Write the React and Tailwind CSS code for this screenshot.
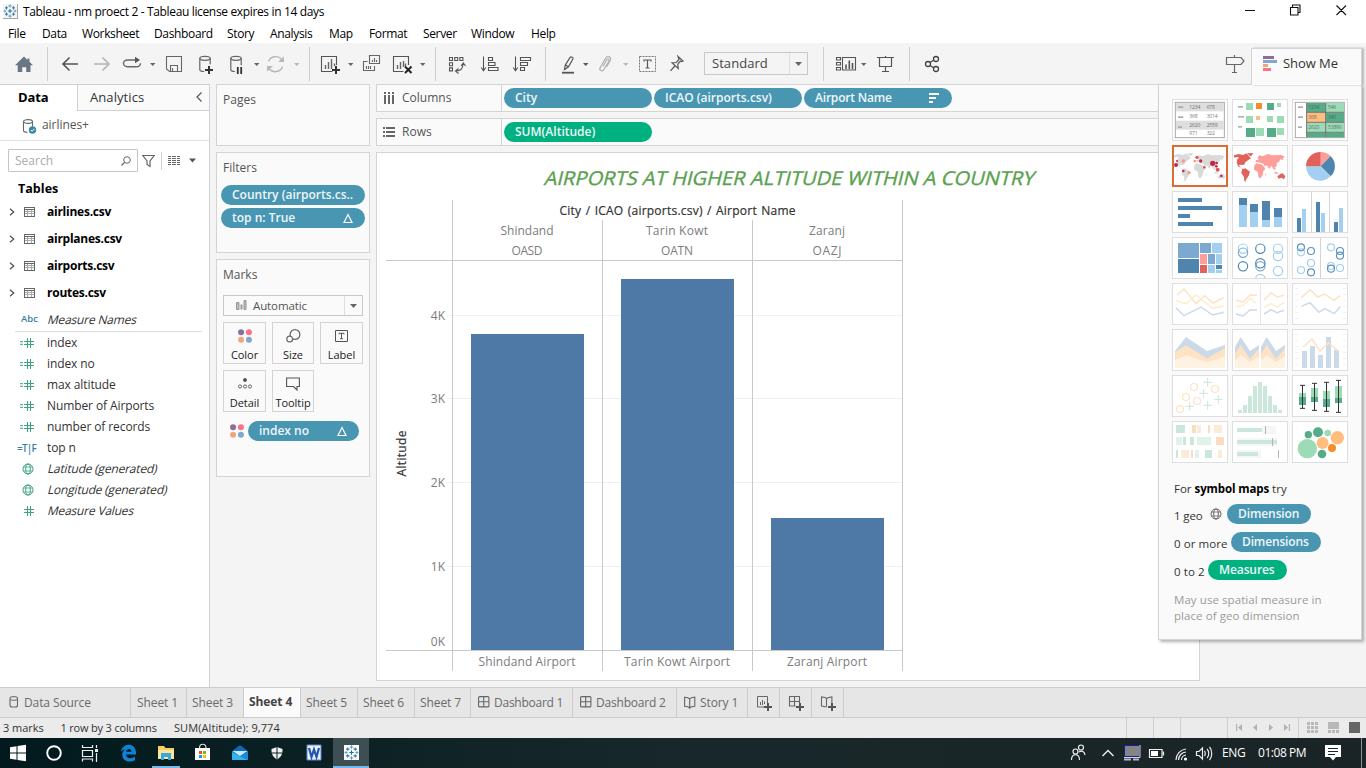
import React from "react";

const UI = "font-['Open_Sans','Noto_Sans',sans-serif]";

/* Icon strip segment: draws in window coordinates, sits in normal flow. */
function Seg({ x, y, w, h, children }) {
  return (
    <svg className="block shrink-0" width={w} height={h} viewBox={`${x} ${y} ${w} ${h}`} fill="none">
      {children}
    </svg>
  );
}

function TableauMark({ size = 14 }) {
  const plus = (x, y, r) => `M${x - r} ${y}h${2 * r}M${x} ${y - r}v${2 * r}`;
  return (
    <svg width={size} height={size} viewBox="0 0 16 16" fill="none" className="block shrink-0">
      <path d={plus(8, 8, 2.4)} stroke="#2b6f9e" strokeWidth="1.2" />
      <path d={plus(8, 2.2, 1.9) + plus(8, 13.8, 1.9) + plus(2.2, 8, 1.6) + plus(13.8, 8, 1.6)} stroke="#5b97bb" strokeWidth="1" />
      <path d={plus(4, 4.4, 1.8) + plus(12, 4.4, 1.8) + plus(4, 11.6, 1.8) + plus(12, 11.6, 1.8)} stroke="#2b7aa8" strokeWidth="1.1" />
    </svg>
  );
}

function TitleBar() {
  return (
    <div className="flex h-[22px] bg-white">
      <div className="flex grow items-center pl-[3px]">
        <div className="border-r border-b border-[#a9a9a9] bg-[#f4f4f4]"><TableauMark size={14} /></div>
        <span className="ml-[5px] pt-[2px] text-[12px] leading-[16px] tracking-[-0.35px] text-black">
          Tableau - nm proect 2 - Tableau license expires in 14 days
        </span>
      </div>
      <Seg x={1226} y={0} w={140} h={22}>
        <path d="M1245 10.500h10M1290.500 7.500h7.500v7.500h-7.500zM1292.500 7v-2h7.500v7.500h-2M1336.500 5.500l9.500 9.500M1346 5.500l-9.500 9.500" stroke="#111" strokeWidth="1.100" />
      </Seg>
    </div>
  );
}

function MenuBar() {
  return (
    <div className="flex h-[21px] items-center bg-white pl-[8px] pt-[2px] text-[12px] leading-[16px] tracking-[-0.35px] text-black">
      <span className="w-[34px]">File</span>
      <span className="w-[40px]">Data</span>
      <span className="w-[72px]">Worksheet</span>
      <span className="w-[73px]">Dashboard</span>
      <span className="w-[43px]">Story</span>
      <span className="w-[59px]">Analysis</span>
      <span className="w-[40px]">Map</span>
      <span className="w-[54px]">Format</span>
      <span className="w-[48px]">Server</span>
      <span className="w-[60px]">Window</span>
      <span>Help</span>
    </div>
  );
}

const caret = (x, y = 63) => `M${x - 2.5} ${y}h5.500l-2.750 3z`;

function Toolbar() {
  return (
    <div className="flex h-[41px] shrink-0 bg-[#f4f4f4]">
      <Seg x={0} y={43} w={310} h={41}>
        <path d="M24 56.500L15 65.200h2.700v6.800h4.500v-4.800h4v4.800h4.300v-6.800H33l-3.500-3.500v-3.200h-2v1.400z" fill="#6a7685" />
        <path d="M47.500 47v34M309.500 47v34" stroke="#cfcfcf" />
        <path d="M78 64H63M69.500 57.500L63 64l6.500 6.500" stroke="#555" strokeWidth="1.600" />
        <path d="M94 64h15M102.500 57.500L109 64l-6.500 6.500" stroke="#b4b4b4" strokeWidth="1.600" />
        <path d="M138 60h-10.500a4 3.300 0 0 0 0 6.700h9a4 3.500 0 0 0 4-3.500" stroke="#666" strokeWidth="1.400" />
        <path d="M135 56.700v6.500l5-3.200z" fill="#555" />
        <path d={caret(152.500)} fill="#666" />
        <path d="M166.500 56.500h15v15h-12l-3-2.500zM170.500 71v-5.500h7v5.500M172.500 71v-3" stroke="#666" strokeWidth="1.100" />
        <g stroke="#666" strokeWidth="1.200">
          <ellipse cx="205" cy="58.300" rx="5.200" ry="2" />
          <path d="M199.800 58.300v11.500c0 1 2 1.700 4.500 1.700M210.200 58.300v6" />
          <ellipse cx="236" cy="58.300" rx="5.200" ry="2" />
          <path d="M230.800 58.300v11.500c0 1 2 1.700 4 1.700M241.200 58.300v7" />
        </g>
        <path d="M209 66v8M205 70h8" stroke="#333" strokeWidth="2" />
        <path d="M237.800 67v7M241.200 67v7" stroke="#333" strokeWidth="1.800" />
        <path d={caret(256.500)} fill="#666" />
        <path d="M268.500 61.500a7.500 7 0 0 1 13.500-1.500M282.500 66.500a7.500 7 0 0 1-13.500 2" stroke="#b8b8b8" strokeWidth="1.400" />
        <path d="M284 56.500v5.500h-6zM267 71.500v-5.500h6z" fill="#b8b8b8" />
        <path d={caret(296.500)} fill="#b8b8b8" />
      </Seg>
      <Seg x={310} y={43} w={236} h={41}>
        <path d="M336.500 65v-8.500h-15v15h11" stroke="#555" strokeWidth="1.100" />
        <path d="M325.500 69v-4M328.500 69v-7M331.500 69v-10M334.500 66v-2.500" stroke="#666" strokeWidth="1.400" />
        <path d="M336 66v8M332 70h8" stroke="#333" strokeWidth="2" />
        <path d={caret(350.500)} fill="#666" />
        <path d="M369.500 55.500h10v8h-10zM367.500 61.500h-4v9h11v-4.500M372.500 62v-2M374.500 62v-4M376.500 62v-2M366.500 69v-3M368.500 69v-3M370.500 69v-3" stroke="#666" strokeWidth="1.100" />
        <path d="M408.500 65v-8.500h-15v15h10" stroke="#555" strokeWidth="1.100" />
        <path d="M397.500 69v-4M400.500 69v-7M403.500 67v-6M405.500 66v-2.500" stroke="#666" strokeWidth="1.400" />
        <path d="M405 66.500l6.500 6.500M411.500 66.500l-6.500 6.500" stroke="#222" strokeWidth="2" />
        <path d={caret(422.500)} fill="#666" />
        <path d="M435.500 47v34M545.500 47v34" stroke="#cfcfcf" />
        <path d="M449.500 57.500h3v3h-3zM454.700 57.500h3v3h-3zM459.900 57.500h3v3h-3zM449.500 62.700h3v3h-3zM449.500 67.900h3v3h-3zM456 71c4 0 7-2.500 7-7.500M461 66l2.300-3 2.200 3M458.500 68.500l-3 2.500 3 2.500" stroke="#555" strokeWidth="1.100" />
        <path d="M483.500 56.500v14M481.300 67.500l2.200 3.200 2.200-3.200M488.500 57.500h4v3h-4zM488.500 62.500h6.500v3h-6.500zM488.500 67.500h9.500v3h-9.500z" stroke="#555" strokeWidth="1.100" />
        <path d="M515.500 56.500v14M513.300 67.500l2.200 3.200 2.200-3.200M520.500 57.500h10v3h-10zM520.500 62.500h7v3h-7zM520.500 67.500h4v3h-4z" stroke="#555" strokeWidth="1.100" />
      </Seg>
      <Seg x={546} y={43} w={158} h={41}>
        <path d="M564.500 69.500l.8-4.500 5-7.800c.7-1 3.300.4 2.700 1.600l-4.500 8zM565.500 65l3 1.800M564.500 69.500l2-1" stroke="#555" strokeWidth="1.200" />
        <path d="M562 72.700h12" stroke="#555" strokeWidth="1.800" />
        <path d={caret(585.500)} fill="#555" />
        <path d="M603 66.500l3.500-6.500c1-1.800 3.200-.6 2.300 1.200l-5 8.500c-1.500 2.500-5 .5-3.700-2l5.500-9.500c2-3.300 6.300-1 4.500 2.500l-3.500 6" stroke="#b0b0b0" strokeWidth="1.200" />
        <path d={caret(625.500)} fill="#b8b8b8" />
        <rect x="639.500" y="56.500" width="16" height="15" stroke="#777" strokeDasharray="2 1" />
        <path d="M644 61.500v-1.500h7v1.500M647.500 60v8M645.500 68h4" stroke="#555" strokeWidth="1.200" />
        <path d="M678 56.500l5 4.500-1.800.6-.9-.5-2.500 3 .4 4.500-6.200-5.800 4.300-.3 2.700-3.200-.4-.9zM674.800 66l-4.300 4.800" stroke="#555" strokeWidth="1.200" />
      </Seg>
      <div className="mt-[9px] flex h-[23px] w-[104px] border border-[#c8c8c8] bg-[#f4f4f4]">
        <span className="w-[84px] pl-[7px] pt-[1px] text-[13px] leading-[19px] tracking-[0.050px] text-[#444]">Standard</span>
        <div className="flex grow items-center justify-center border-l border-[#dedede]">
          <svg width="7" height="4" viewBox="0 0 7 4"><path d="M0 0h7L3.500 4z" fill="#666" /></svg>
        </div>
      </div>
      <Seg x={808} y={43} w={443} h={41}>
        <path d="M823.500 47v34M909.500 47v34" stroke="#cfcfcf" />
        <path d="M836.500 57.500h4v2.500h-4zM836.500 62.500h4v2.500h-4zM836.500 67.500h4v2.500h-4zM842.500 57.500h13v12.500h-13z" stroke="#555" strokeWidth="1.100" />
        <path d="M846 69v-4.500M849.300 69v-8.500M852.500 69v-6" stroke="#555" strokeWidth="1.600" />
        <path d={caret(863.500)} fill="#666" />
        <path d="M877 57.500h17M879.500 58v8.500h12v-8.500M885.500 56v1.500M885.500 66.500v4.500M882 71.500h7" stroke="#555" strokeWidth="1.200" />
        <g stroke="#444" strokeWidth="1.300">
          <circle cx="928" cy="64" r="2.500" /><circle cx="936" cy="59" r="2.500" /><circle cx="936" cy="69" r="2.500" />
          <path d="M930 62.500l4-2.500M930 65.500l4 2.500" />
        </g>
        <path d="M1226.500 57.500h14.500l3 3.500-3 3.500h-14.500zM1234.500 55v2.500M1234.500 64.500v8M1232 72.500h5" stroke="#666" strokeWidth="1.200" />
      </Seg>
    </div>
  );
}

function TableIcon() {
  return (
    <svg width="11" height="10" viewBox="0 0 11 10" fill="none" shapeRendering="crispEdges">
      <path d="M1 2.500h9M1 4.500h9M1 6.500h9M3.500 3v6M7.500 3v6" stroke="#aaa" />
      <path d="M.5.500h10v9H.5zM1 2.500h9" stroke="#666" />
    </svg>
  );
}

function HashIcon({ calc }) {
  return (
    <svg width="16" height="12" viewBox="0 0 16 12" fill="none">
      {calc && <path d="M1 4.700h3M1 7.300h3" stroke="#3fa37c" />}
      <path d="M5 4.500h10M5 7.500h10M8.500 1v10M11.500 1v10" stroke="#3fa37c" strokeWidth="1.100" />
    </svg>
  );
}

function Globe({ color = "#3fa37c", size = 12 }) {
  return (
    <svg width={size} height={size} viewBox="0 0 12 12" fill="none" stroke={color}>
      <circle cx="6" cy="6" r="5" /><ellipse cx="6" cy="6" rx="2.300" ry="5" /><path d="M1.500 4h9M1.500 8h9" strokeWidth=".8" />
    </svg>
  );
}

const fields = [
  ["calc", "index"], ["calc", "index no"], ["calc", "max altitude"], ["calc", "Number of Airports"],
  ["calc", "number of records"], ["tf", "top n"], ["geo", "Latitude (generated)"], ["geo", "Longitude (generated)"], ["num", "Measure Values"],
];

function FieldIcon({ kind }) {
  if (kind === "tf") return <span className="text-[10px] font-semibold tracking-[-0.750px] whitespace-nowrap text-[#3a7f9f]">=T|F</span>;
  if (kind === "geo") return <Globe />;
  return <HashIcon calc={kind === "calc"} />;
}

const slanted = "inline-block origin-center -skew-x-[14deg]";

function DataPane() {
  return (
    <aside className="flex w-[210px] shrink-0 flex-col border-t border-r border-[#d0d0d0] bg-white">
      <div className="flex h-[26px]">
        <div className="w-[77px] pt-[3px] pl-[18px] text-[13px] leading-[18px] font-bold tracking-[-0.1px] text-black">Data</div>
        <div className="flex grow items-center justify-between border-b border-l border-[#d0d0d0] bg-[#fafafa] pr-[7px] pl-[12px] text-[13px] leading-[18px] tracking-[0.080px] text-[#333]">
          <span className="-mt-[2px]">Analytics</span>
          <svg width="6" height="10" viewBox="0 0 6 10" fill="none" className="-mt-[2px]"><path d="M5.500.5L1 5l4.500 4.500" stroke="#555" strokeWidth="1.200" /></svg>
        </div>
      </div>
      <div className="flex h-[30px] items-center border-b border-[#e0e0e0] pl-[22px]">
        <svg width="15" height="16" viewBox="0 0 15 16" fill="none">
          <ellipse cx="6" cy="3.500" rx="4.500" ry="1.900" stroke="#666" strokeWidth="1.100" />
          <path d="M1.500 3.500v9c0 1 1.500 1.700 4 1.800M10.500 3.500v5" stroke="#666" strokeWidth="1.100" />
          <circle cx="10.500" cy="12" r="3.700" fill="#3a87a8" /><path d="M8.800 12l1.300 1.300 2.200-2.500" stroke="#fff" />
        </svg>
        <span className="-mt-px ml-[5px] text-[12px] tracking-[-0.050px] text-[#555]">airlines+</span>
      </div>
      <div className="mt-[8px] flex h-[23px] items-center pl-[8px]">
        <div className="flex h-[23px] w-[130px] items-center justify-between rounded-[1px] border border-[#c4c4c4] pr-[6px] pl-[6px] text-[12px] text-[#aaa]">
          <span>Search</span>
          <svg width="10" height="10" viewBox="0 0 10 10" fill="none"><circle cx="6" cy="4" r="3.300" stroke="#666" /><path d="M3.600 6.400L.5 9.500" stroke="#666" strokeWidth="1.300" /></svg>
        </div>
        <svg className="ml-[4px]" width="13" height="14" viewBox="0 0 13 14" fill="none"><path d="M.8 1.500h11.400L8 7v5.500l-3-2V7z" stroke="#666" strokeWidth="1.200" /></svg>
        <div className="ml-[6px] h-[18px] w-px bg-[#d0d0d0]" />
        <svg className="ml-[6px]" width="13" height="10" viewBox="0 0 13 10" fill="none" shapeRendering="crispEdges"><path d="M0 .5h3M4 .5h4M9 .5h3M0 2.500h3M4 2.500h4M9 2.500h3M0 4.500h3M4 4.500h4M9 4.500h3M0 6.500h3M4 6.500h4M9 6.500h3M0 8.500h3M4 8.500h4M9 8.500h3" stroke="#666" /></svg>
        <svg className="ml-[8px]" width="7" height="5" viewBox="0 0 7 5"><path d="M0 .5h7L3.500 4.500z" fill="#555" /></svg>
      </div>
      <div className="mt-[8px] h-[18px] pl-[18px] text-[12.5px] leading-[18px] font-bold tracking-[0.030px] text-black">Tables</div>
      <div className="flex flex-col text-[12px] font-bold tracking-[-0.25px] text-black">
        {["airlines.csv", "airplanes.csv", "airports.csv", "routes.csv"].map((t) => (
          <div key={t} className="flex h-[27px] items-center pl-[9px]">
            <svg width="6" height="8" viewBox="0 0 6 8" fill="none"><path d="M1 .7L4.700 4 1 7.300" stroke="#555" strokeWidth="1.300" /></svg>
            <span className="ml-[9px] w-[23px] pt-[1px]"><TableIcon /></span>
            <span>{t}</span>
          </div>
        ))}
      </div>
      <div className="flex h-[25px] items-center pt-[2px] pl-[21px] text-[12px]">
        <span className="w-[27px] text-[9.500px] font-semibold text-[#3a7f9f]">Abc</span>
        <span className={"tracking-[-0.2px] text-[#333] " + slanted}>Measure Names</span>
      </div>
      <div className="mr-[7px] ml-[15px] h-px bg-[#dcdcdc]" />
      <div className="flex flex-col text-[12px] text-[#333]">
        {fields.map(([kind, name]) => (
          <div key={name} className="flex h-[21px] items-center">
            <span className={"flex w-[47px] shrink-0 items-center pt-px " + (kind === "geo" ? "pl-[22px]" : kind === "tf" ? "pl-[17px]" : "pl-[19px]")}><FieldIcon kind={kind} /></span>
            <span className={kind === "geo" || kind === "num" ? "ml-px tracking-[-0.2px] " + slanted : "tracking-[-0.1px]"}>{name}</span>
          </div>
        ))}
      </div>
    </aside>
  );
}

function Pill({ className, children, icon }) {
  return (
    <div className={"flex h-[20px] items-center justify-between rounded-full pr-[12px] pl-[11px] text-[12px] leading-[18px] font-semibold whitespace-nowrap text-[#eef6f9] " + className}>
      <span className="-mt-px">{children}</span>{icon}
    </div>
  );
}
const Delta = () => <svg width="10" height="11" viewBox="0 0 10 11" fill="none"><path d="M5 1.500L9 9.500H1z" stroke="#fff" strokeWidth="1.200" /></svg>;

function Card({ title, className, children }) {
  return (
    <section className={"flex flex-col border border-[#d4d4d4] bg-[#fafafa] " + className}>
      <h2 className="pt-[6px] pl-[6px] text-[12px] leading-[18px] text-[#555]">{title}</h2>
      {children}
    </section>
  );
}

function Dots() {
  return (
    <svg width="14" height="14" viewBox="0 0 15 15">
      <circle cx="3.300" cy="3.500" r="3.200" fill="#8a6f9a" /><circle cx="11.700" cy="3.500" r="3.200" fill="#fb7185" />
      <circle cx="3.300" cy="11.500" r="3.200" fill="#f1a67c" /><circle cx="11.700" cy="11.500" r="3.200" fill="#83a6cf" />
    </svg>
  );
}

function MarkButton({ label, children }) {
  return (
    <div className="flex h-[42px] flex-col items-center justify-between border border-[#d4d4d4] bg-[#fafafa] pt-[5px]">
      <div className="flex h-[15px] items-center">{children}</div>
      <span className="text-[11px] leading-[17px] tracking-[-0.05px] text-[#222]">{label}</span>
    </div>
  );
}

function Cards() {
  return (
    <div className="ml-[6px] flex w-[154px] shrink-0 flex-col gap-[6px]">
      <Card title="Pages" className="h-[62px]" />
      <Card title="Filters" className="h-[101px]">
        <div className="mt-[8px] flex flex-col gap-[3px] px-[4px]">
          <Pill className="bg-[#4996b2]">Country (airports.cs..</Pill>
          <Pill className="bg-[#4996b2]" icon={<Delta />}>top n: True</Pill>
        </div>
      </Card>
      <Card title="Marks" className="h-[218px]">
        <div className="mx-[6px] mt-[11px] flex h-[21px] shrink-0 border border-[#c8c8c8] bg-[#fafafa]">
          <div className="flex w-[121px] items-center border-r border-[#dedede] pl-[12px]">
            <svg width="11" height="10" viewBox="0 0 11 10" className="-mt-px"><path d="M.5 2.500h2.500v7H.5z" fill="#bbb" stroke="#999" /><path d="M4.500 4.500h2v5h-2z" fill="#999" /><path d="M8 .5h2v9H8z" fill="#bbb" stroke="#999" /></svg>
            <span className="ml-[6px] text-[11.500px] tracking-[-0.100px] text-[#555]">Automatic</span>
          </div>
          <div className="flex grow items-center justify-center"><svg width="7" height="4" viewBox="0 0 7 4"><path d="M0 0h7L3.500 4z" fill="#666" /></svg></div>
        </div>
        <div className="mx-[6px] mt-[6px] grid grid-cols-[43px_42px_43px] gap-x-[6px] gap-y-[6px]">
          <MarkButton label="Color"><Dots /></MarkButton>
          <MarkButton label="Size"><svg width="15" height="14" viewBox="0 0 15 14" fill="none" stroke="#666" strokeWidth="1.200"><circle cx="9" cy="5.500" r="4.900" /><circle cx="3.700" cy="10" r="2.900" fill="#fafafa" /></svg></MarkButton>
          <MarkButton label="Label"><svg width="13" height="12" viewBox="0 0 13 12" fill="none" stroke="#555"><path d="M.5.500h12v11H.500z" /><path d="M4 4.300V3.300h5v1M6.500 3.300v5.400M5 8.700h3" /></svg></MarkButton>
          <MarkButton label="Detail"><svg width="14" height="11" viewBox="0 0 14 11" fill="none" stroke="#666"><circle cx="7" cy="2" r="1.600" fill="#555" /><circle cx="2" cy="8.500" r="1.600" /><circle cx="7" cy="8.500" r="1.600" /><circle cx="12" cy="8.500" r="1.600" /></svg></MarkButton>
          <MarkButton label="Tooltip"><svg width="14" height="14" viewBox="0 0 14 14" fill="none" stroke="#555" strokeWidth="1.100"><path d="M.6 1h12.800v8.500H11V13L7.500 9.500H.6z" /></svg></MarkButton>
        </div>
        <div className="mt-[9px] flex items-center pl-[13px]">
          <Dots />
          <Pill className="ml-[4px] w-[111px] bg-[#4996b2]" icon={<Delta />}>index no</Pill>
        </div>
      </Card>
    </div>
  );
}

function Shelf({ label, icon, children }) {
  return (
    <div className="flex h-[28px] shrink-0 border border-[#d4d4d4] bg-[#fafafa]">
      <div className="flex w-[125px] items-center border-r border-[#d4d4d4] pl-[6px]">
        {icon}<span className="ml-[7px] text-[12px] text-[#555]">{label}</span>
      </div>
      <div className="flex items-center gap-[2px] pl-[2px]">{children}</div>
    </div>
  );
}

const bars = [
  { x: 452, top: 334, city: "Shindand", cw: 53, icao: "OASD", iw: 31, name: "Shindand Airport", nw: 97 },
  { x: 602, top: 279, city: "Tarin Kowt", cw: 62, icao: "OATN", iw: 32, name: "Tarin Kowt Airport", nw: 106 },
  { x: 752, top: 518, city: "Zaranj", cw: 36, icao: "OAZJ", iw: 29, name: "Zaranj Airport", nw: 80 },
];

function Chart() {
  return (
    <svg className="block" width="821" height="527" viewBox="377 153 821 527" fontSize="12" fill="#7c7c7c">
      <text transform="translate(543.5 185) skewX(-14)" fontSize="19" textLength="490" lengthAdjust="spacingAndGlyphs" fill="#59a14f" stroke="#59a14f" strokeWidth=".35">AIRPORTS AT HIGHER ALTITUDE WITHIN A COUNTRY</text>
      <g fill="#333" stroke="#333" strokeWidth=".2">
        <text x="559.500" y="215" textLength="236" wordSpacing="1">City / ICAO (airports.csv) / Airport Name</text>
        <text transform="translate(406 476.500) rotate(-90)" textLength="46">Altitude</text>
      </g>
      <g shapeRendering="crispEdges">
        {[315, 398, 482, 566].map((y) => <path key={y} d={`M447 ${y}.5H902`} stroke="#f0f0f0" />)}
        {bars.map((b) => <rect key={b.x} x={b.x + 19} y={b.top} width="113" height={650 - b.top} fill="#4e79a7" />)}
        <path d="M386 260.500h517M386 650.500h517M452.500 200v471M602.500 220v451M752.500 220v451M902.500 200v471" stroke="#c9c9c9" />
      </g>
      {bars.map((b) => (
        <g key={b.name} textAnchor="middle">
          <text x={b.x + 75} y="235" textLength={b.cw}>{b.city}</text>
          <text x={b.x + 75} y="255" textLength={b.iw}>{b.icao}</text>
          <text x={b.x + 75} y="666" textLength={b.nw}>{b.name}</text>
        </g>
      ))}
      <g textAnchor="end">
        <text x="445" y="320">4K</text><text x="445" y="403">3K</text><text x="445" y="487">2K</text><text x="445" y="571">1K</text><text x="445" y="646">0K</text>
      </g>
    </svg>
  );
}

function Worksheet() {
  return (
    <div className="ml-[6px] flex w-[824px] shrink-0 flex-col gap-[6px]">
      <Shelf label="Columns" icon={<svg width="12" height="12" viewBox="0 0 12 12" shapeRendering="crispEdges"><path d="M1 0h2v2H1zM5 0h2v2H5zM9 0h2v2H9zM1 3h2v9H1zM5 3h2v9H5zM9 3h2v9H9z" fill="#666" /></svg>}>
        <Pill className="w-[148px] bg-[#4996b2]">City</Pill>
        <Pill className="w-[148px] bg-[#4996b2]">ICAO (airports.csv)</Pill>
        <Pill className="w-[148px] bg-[#4996b2]" icon={<svg width="11" height="10" viewBox="0 0 11 10" shapeRendering="crispEdges"><path d="M0 0h10v2H0zM0 4h7v2H0zM0 8h4v2H0z" fill="#fff" /></svg>}><span className="tracking-[-0.2px]">Airport Name</span></Pill>
      </Shelf>
      <Shelf label="Rows" icon={<svg width="12" height="10" viewBox="0 0 12 10" shapeRendering="crispEdges"><path d="M0 0h2v2H0zM0 4h2v2H0zM0 8h2v2H0zM3 0h9v2H3zM3 4h9v2H3zM3 8h9v2H3z" fill="#666" /></svg>}>
        <Pill className="w-[148px] bg-[#00b180]">SUM(Altitude)</Pill>
      </Shelf>
      <div className="h-[529px] border border-[#d4d4d4] bg-white"><Chart /></div>
    </div>
  );
}

/* Show Me thumbnails, drawn on a 168 x 126 grid. */
const R = (list, fill) => list.map(([x, y, w, h], i) => <rect key={i} x={x} y={y} width={w} height={h} fill={fill} />);
const C = (list, stroke) => list.map(([x, y], i) => <circle key={i} cx={x} cy={y} r="14" fill="none" stroke={stroke} strokeWidth="3.500" />);
const C2 = (list, stroke) => list.map(([x, y], i) => <circle key={i} cx={x} cy={y} r="10.500" fill="none" stroke={stroke} strokeWidth="3.500" />);
const L = (pts, stroke) => <polyline points={pts} fill="none" stroke={stroke} strokeWidth="4.500" />;
const N = (x, y, s) => <text x={x} y={y} fontSize="15" fill="#555" textLength={s.length * 8.2} opacity=".8">{s}</text>;

const americas = "M6 31L20 27 33 30 44 25 50 32 57 40 48 46 40 52 36 60 30 59 20 60 28 70 34 73 30 70 18 64 14 52 16 42 22 38 14 36 6 38zM46 25L64 24 58 33 52 32zM30 73L40 70 54 80 50 92 42 104 41 110 37 108 36 96 28 84z";
const eurasia = "M70 51L72 45 80 44 76 38 82 31 92 34 108 27 120 31 148 30 159 35 152 40 154 45 144 43 142 50 134 54 134 64 128 67 132 72 126 74 118 62 112 71 104 61 98 64 94 56 88 54 80 52zM67 62L72 55 84 57 92 60 100 72 94 78 92 90 86 99 80 98 77 80 66 74zM100 86h4l-3 7zM126 80l10 2 2 6-10-3z";
const aus = "M136 94L146 86 152 85 160 94 156 103 148 98 140 101z";

const thumbs = [
  <><rect x="10" y="10" width="147" height="106" fill="#fff" stroke="#a9a9a9" strokeWidth="3" />{R([[12, 12, 143, 25], [12, 65, 143, 27]], "#dedede")}{R([[18, 22, 16, 5], [18, 52, 16, 5], [18, 82, 12, 5]], "#aaa")}{N(52, 31, "1234")}{N(104, 31, "678")}{N(52, 58, "368")}{N(104, 58, "3014")}{N(52, 85, "2620")}{N(104, 85, "2559")}{N(52, 109, "971")}{N(104, 109, "322")}</>,
  <>{R([[18, 21, 15, 5], [18, 51, 18, 5], [18, 81, 12, 5]], "#b3b3b3")}{R([[42, 12, 21, 21], [42, 51, 21, 21], [135, 12, 12, 12], [105, 51, 18, 18], [135, 51, 21, 21], [72, 87, 24, 24], [135, 87, 21, 21]], "#9bdbb5")}{R([[42, 87, 27, 27], [105, 12, 21, 21], [105, 87, 27, 27]], "#54ac88")}{R([[72, 12, 18, 18]], "#f28e2b")}{R([[72, 51, 12, 12]], "#ffbe7d")}</>,
  <><rect x="10" y="10" width="147" height="106" fill="#fff" stroke="#a9a9a9" strokeWidth="3" />{R([[45, 12, 55, 27], [102, 42, 54, 27], [45, 102, 55, 13], [102, 102, 54, 13]], "#54ac88")}{R([[102, 12, 54, 27], [45, 72, 55, 27], [102, 72, 54, 27]], "#9bdbb5")}{R([[45, 42, 55, 27]], "#ffbe7d")}<path d="M44 12v103M101 12v103M44 40h112M44 70h112M44 100h112" stroke="#6e6e6e" strokeWidth="3" />{R([[18, 22, 15, 5], [18, 52, 15, 5], [18, 82, 12, 5]], "#aaa")}{N(49, 31, "1234")}{N(108, 31, "546")}{N(49, 61, "368")}{N(108, 61, "340")}{N(49, 91, "2620")}{N(108, 91, "53890")}</>,
  <><path d={americas + eurasia + aus} fill="#dadada" />{[[12, 60, 6], [15, 48, 3], [34, 78, 4], [86, 48, 5], [122, 55, 8], [134, 54, 4], [133, 64, 4], [148, 93, 4]].map(([x, y, r], i) => <circle key={i} cx={x} cy={y} r={r} fill="#c1284a" />)}{[[34, 48, 5], [75, 37, 5], [68, 48, 4], [97, 67, 4], [51, 83, 5], [137, 74, 6]].map(([x, y, r], i) => <circle key={i} cx={x} cy={y} r={r} fill={i % 2 ? "#e1574f" : "#ff9888"} />)}</>,
  <><path d={americas + aus} fill="#e1625a" /><path d={eurasia} fill="#ff9d9a" /></>,
  <><path d="M86 64V21A43 43 0 0 1 116 33z" fill="#ff9d9a" /><path d="M86 64L116 33A43 43 0 0 1 116 94z" fill="#4e84ae" /><path d="M86 64L116 94A43 43 0 0 1 42 64z" fill="#a3d0f0" /><path d="M86 64H42A43 43 0 0 1 86 21z" fill="#e1625a" /></>,
  <>{R([[18, 21, 72, 12], [18, 45, 132, 12], [18, 69, 36, 12], [18, 93, 105, 12]], "#4e84ae")}</>,
  <>{R([[21, 42, 24, 66], [54, 63, 24, 45], [90, 87, 24, 21], [126, 78, 24, 30]], "#a3d0f0")}{R([[21, 21, 24, 21], [54, 39, 24, 24], [90, 30, 24, 57], [126, 51, 24, 27]], "#4e84ae")}</>,
  <>{R([[57, 3, 3, 120], [111, 3, 3, 120]], "#d4d4d4")}{R([[15, 81, 12, 42], [72, 33, 12, 90], [126, 93, 12, 30]], "#4e84ae")}{R([[30, 54, 12, 69], [87, 66, 12, 57], [141, 51, 12, 72]], "#a3d0f0")}</>,
  <>{R([[18, 18, 63, 45], [84, 18, 33, 30], [108, 51, 21, 30]], "#7ba9cf")}{R([[120, 18, 30, 30], [132, 51, 18, 30], [108, 84, 21, 24], [132, 99, 18, 9]], "#a3d0f0")}{R([[18, 66, 63, 42], [132, 84, 18, 12]], "#4e84ae")}{R([[84, 51, 21, 30]], "#ff9d9a")}{R([[84, 84, 21, 24]], "#e1625a")}</>,
  <>{C([[33, 35], [138, 35], [138, 57], [138, 102], [85, 126]], "#a3cfee")}{C([[33, 47], [85, 88]], "#7ba9cf")}{C([[33, 88], [85, 35], [85, 79]], "#4e84ae")}</>,
  <>{R([[84, 3, 3, 120]], "#d4d4d4")}{C2([[27, 46], [57, 78], [27, 99], [117, 31], [117, 87], [144, 93]], "#a3cfee")}{C2([[27, 31], [57, 42], [57, 106], [144, 42], [144, 56], [117, 95]], "#5f93bd")}</>,
  <>{L("15,36 36,18 72,62 98,38 123,60 155,44", "#fde2c4")}{L("12,53 42,62 72,36 122,76 155,69", "#fdeecb")}{L("12,75 36,98 87,72 122,96 155,88", "#cbdae9")}</>,
  <>{R([[84, 3, 3, 120]], "#e5e5e5")}{L("12,52 33,57 54,36 75,37", "#fde2c4")}{L("96,52 117,29 135,42 156,37", "#fde2c4")}{L("12,71 33,68 54,46 72,60", "#fdeecb")}{L("96,74 117,62 135,72 156,59", "#fdeecb")}{L("12,93 33,99 54,81 75,81", "#cbdae9")}{L("96,93 117,80 135,89 156,82", "#cbdae9")}</>,
  <>{R([15, 33, 51, 69, 87, 105].flatMap((y) => [[9, y, 9, 2], [153, y, 9, 2]]), "#e8e8e8")}{L("28,44 54,20 78,42 98,33 126,52 145,37", "#fde2c4")}{L("28,70 54,59 81,88 98,77 127,92 145,70", "#cbdae9")}</>,
  <><path d="M9 66L42 24 105 66 159 48V117H9z" fill="#cbdae9" /><path d="M9 70L42 49 105 88 159 57V117H9z" fill="#fde2c4" /><path d="M9 93L42 79 105 100 159 82V117H9z" fill="#fef3e2" /></>,
  <>{[0, 78].map((d) => <g key={d} transform={`translate(${d})`}><path d="M9 54L26 24 54 66 81 48V117H9z" fill="#cbdae9" /><path d="M9 75L26 48 54 90 81 58V117H9z" fill="#fde2c4" /><path d="M9 95L26 78 54 99 81 82V117H9z" fill="#fef3e2" /></g>)}{R([[81, 20, 6, 97]], "#fff")}</>,
  <>{R([15, 33, 51, 69, 87, 105].flatMap((y) => [[9, y, 9, 2], [153, y, 9, 2]]), "#e8e8e8")}{R([[30, 66, 15, 51], [54, 51, 15, 66], [78, 78, 15, 39], [102, 24, 15, 93], [126, 63, 15, 54]], "#cbdae9")}{L("34,54 60,30 84,66 110,41 138,66", "#fde2c4")}</>,
  <>{C2([[66, 36], [129, 42], [42, 66], [75, 78], [24, 102]], "#fde2c4")}<path d="M94 22h26M107 9v26M82 55h26M95 42v26M126 73h26M139 60v26M40 94h26M53 81v26M94 91h26M107 78v26" stroke="#cbe6da" strokeWidth="3" /></>,
  <>{R([[18, 105, 12, 9], [33, 90, 12, 24], [48, 63, 12, 51], [63, 33, 12, 81], [78, 21, 12, 93], [93, 33, 12, 81], [108, 63, 12, 51], [123, 90, 12, 24], [138, 105, 12, 9]], "#cbe6da")}</>,
  <>{R([[21, 54, 21, 12], [57, 39, 21, 27], [93, 48, 21, 24], [129, 33, 21, 36]], "#9bdbb5")}{R([[21, 66, 21, 24], [57, 66, 21, 15], [93, 72, 21, 24], [129, 69, 21, 15]], "#54ac88")}<path d="M31.500 31v70M67.500 25v82M103.500 22v88M139.500 16v97M24 31h15M24 100h15M60 25h15M60 106h15M96 22h15M96 109h15M132 16h15M132 112h15" stroke="#333" strokeWidth="3" /></>,
  <>{R([[12, 12, 27, 24], [54, 48, 12, 24], [12, 87, 6, 24], [99, 87, 21, 24], [33, 48, 9, 24]], "#cbe6da")}{R([[12, 48, 18, 24], [75, 48, 42, 24], [69, 87, 12, 24]], "#e0f2e9")}{R([[60, 12, 12, 24], [108, 12, 6, 24], [132, 48, 24, 24], [57, 87, 6, 24]], "#fbdcc0")}{R([[75, 12, 12, 24], [126, 12, 24, 24], [27, 87, 24, 24], [138, 87, 12, 24]], "#fdebd9")}</>,
  <>{R([[90, 15, 42, 24], [15, 51, 120, 24], [15, 87, 72, 24]], "#f6f6f6")}{R([[15, 21, 75, 12], [15, 57, 120, 12], [15, 93, 63, 12]], "#cbe6da")}{R([[99, 15, 3, 24], [120, 51, 3, 24], [138, 87, 3, 24]], "#b4b4b4")}</>,
  <>{[[46, 83, 29, "#9bdbb5"], [49, 41, 11, "#54ac88"], [78, 34, 15, "#54ac88"], [107, 36, 10, "#9bdbb5"], [136, 50, 20, "#ffbe7d"], [92, 66, 18, "#ffbe7d"], [120, 81, 12, "#f28e2b"], [90, 99, 13, "#54ac88"]].map(([x, y, r, f], i) => <circle key={i} cx={x} cy={y} r={r} fill={f} />)}</>,
];

function ShowMe() {
  return (
    <div className="absolute top-[48px] left-[1158px] z-10 flex w-[204px] flex-col text-[12px] text-[#333]">
      <div className="z-10 -mb-px ml-[93px] flex h-[37px] items-center border border-b-0 border-[#d4d4d4] bg-[#fafafa] pl-[11px] shadow-[2px_0_2px_rgba(0,0,0,0.25)]">
        <svg width="15" height="16" viewBox="0 0 15 16" className="-mt-[6px]" shapeRendering="crispEdges"><path d="M0 0h11v3H0z" fill="#8a6f9a" /><path d="M0 4h14v3H0z" fill="#83a6cf" /><path d="M0 8h5v3H0z" fill="#f1a67c" /><path d="M0 12h8v3H0z" fill="#fb7185" /></svg>
        <span className="-mt-[6px] ml-[5px] text-[13px] tracking-[-0.050px] text-[#333]">Show Me</span>
      </div>
      <div className="h-[556px] border border-[#d4d4d4] bg-[#fafafa] pt-[14px] pl-[13px] shadow-[2px_2px_3px_rgba(0,0,0,0.3)]">
        <div className="grid grid-cols-[56px_56px_56px] gap-[4px]">
          {thumbs.map((t, i) => (
            <div key={i} className={"h-[42px] bg-white " + (i === 3 ? "p-px outline-2 -outline-offset-2 outline-[#dd6b35]" : "border border-[#dedede]")}>
              <svg className="block" width="54" height="40" viewBox="3 3 162 120">{t}</svg>
            </div>
          ))}
        </div>
        <div className="mt-[17px] flex flex-col pl-[2px] text-[11.500px]">
          <div className="h-[16px] leading-[18px]">For <b className="font-bold tracking-[-0.1px] text-black">symbol maps</b> try</div>
          <div className="mt-[8px] flex h-[20px] items-center">
            <span className="w-[36px] pt-[4px] tracking-[-0.1px]">1 geo</span>
            <Globe color="#666" size={12} />
            <Pill className="ml-[5px] w-[84px] bg-[#4996b2] tracking-[-0.100px]">Dimension</Pill>
          </div>
          <div className="mt-[8px] flex h-[20px] items-center">
            <span className="w-[57px] pt-[4px] tracking-[0.080px]">0 or more</span>
            <Pill className="w-[90px] bg-[#4996b2] tracking-[-0.150px]">Dimensions</Pill>
          </div>
          <div className="mt-[8px] flex h-[20px] items-center">
            <span className="w-[34px] pt-[4px] tracking-[0.080px]">0 to 2</span>
            <Pill className="w-[79px] bg-[#00b180] tracking-[-0.100px]">Measures</Pill>
          </div>
          <p className="mt-[12px] w-[170px] leading-[16px] tracking-[0.070px] text-[#9a9a9a]">May use spatial measure in place of geo dimension</p>
        </div>
      </div>
    </div>
  );
}

const GridIcon = () => <svg width="12" height="12" viewBox="0 0 12 12" fill="none" className="-mt-px shrink-0"><rect x=".6" y=".6" width="10.300" height="10.300" rx="1" stroke="#666" strokeWidth="1.100" /><path d="M5.700.6v10.300M.6 5.700h10.300" stroke="#666" strokeWidth="1.100" /></svg>;
const StoryIcon = () => <svg width="12" height="13" viewBox="0 0 12 13" fill="none" className="shrink-0"><path d="M.6 1.200l3.400.5 1.700 1.200 1.700-1.200 3.400-.5v9l-3.400.5-1.700 1.500L4 10.700l-3.400-.5zM5.700 3v9" stroke="#666" strokeWidth="1.100" /></svg>;

function SheetTabs() {
  const tab = "flex h-full shrink-0 items-center border-r border-[#cccccc] ";
  return (
    <div className="flex h-[31px] shrink-0 border-y border-[#cccccc] bg-[#e6e6e6] text-[12px] tracking-[-0.1px] whitespace-nowrap text-[#6a6a6a]">
      <div className={tab + "w-[131px] pl-[9px]"}>
        <svg width="10" height="12" viewBox="0 0 10 12" fill="none" className="-mt-[2px] mr-[5px]"><rect x="1" y=".7" width="7.500" height="10.300" rx="2" stroke="#666" strokeWidth="1.100" /><path d="M1 3.500c1 1 6.500 1 7.500 0" stroke="#666" /></svg>
        Data Source
      </div>
      <div className={tab + "w-[56px] pl-[6px]"}>Sheet 1</div>
      <div className={tab + "w-[57px] pl-[5px]"}>Sheet 3</div>
      <div className={tab + "w-[57px] bg-[#fafafa] pb-[2px] pl-[5px] font-bold tracking-[-0.1px] text-[#444]"}>Sheet 4</div>
      <div className={tab + "w-[57px] pl-[5px]"}>Sheet 5</div>
      <div className={tab + "w-[57px] pl-[5px]"}>Sheet 6</div>
      <div className={tab + "w-[56px] pl-[5px]"}>Sheet 7</div>
      <div className={tab + "w-[102px] gap-[4px] pl-[7px] tracking-[-0.25px]"}><GridIcon />Dashboard 1</div>
      <div className={tab + "w-[104px] gap-[4px] pl-[7px] tracking-[-0.2px]"}><GridIcon />Dashboard 2</div>
      <div className={tab + "w-[71px] gap-[4px] pl-[7px]"}><StoryIcon />Story 1</div>
      <Seg x={748} y={688} w={100} h={29}>
        <path d="M767.500 703v-6.500h-10v10.500h7M760.500 705v-3M762.500 705v-5M764.500 704v-2.500" stroke="#666" />
        <path d="M799.500 703v-6.500h-10v9.500h6M794.500 696.500v9.500M789.500 701.500h10" stroke="#666" strokeWidth="1.100" />
        <path d="M826.500 707l-5-1v-9l3.500.5 1.700 1 1.700-1 3.500-.5v6M826.500 698.500v8" stroke="#666" strokeWidth="1.100" />
        <path d="M768 703v8M764 707h8M800 703v8M796 707h8M832 703v8M828 707h8" stroke="#555" strokeWidth="2" />
        <path d="M779.500 688v29M811.500 688v29M843.500 688v29" stroke="#ccc" />
      </Seg>
    </div>
  );
}

function StatusBar() {
  return (
    <div className="flex h-[20px] shrink-0 justify-between bg-[#ebebeb] text-[11px] leading-[20px] tracking-[-0.05px] text-[#333]">
      <div className="flex pl-[3px]"><span className="w-[57.500px]">3 marks</span><span className="w-[113.500px] tracking-[-0.180px]">1 row by 3 columns</span><span className="tracking-[0.080px]">SUM(Altitude): 9,774</span></div>
      <Seg x={1116} y={718} w={250} h={20}>
        <path d="M1126.500 718v20M1153.500 718v20M1180.500 718v20M1227.500 718v20M1298.500 718v20" stroke="#cfcfcf" />
        <path d="M1236 724h1.200v7h-1.200zM1242 724v7l-4-3.500zM1257 724v7l-4-3.500zM1269 724v7l4-3.500zM1284 724v7l4-3.500zM1288.800 724h1.200v7h-1.200z" fill="#b2b2b2" />
        <path d="M1307 722h3v3h-3zM1311 722h3v3h-3zM1315 722h3v3h-3zM1307 726h3v3h-3zM1311 726h3v3h-3zM1315 726h3v3h-3zM1307 730h3v3h-3zM1311 730h3v3h-3zM1315 730h3v3h-3zM1328 722h11v7h-11zM1328 730h3v3h-3zM1332 730h3v3h-3zM1336 730h3v3h-3z" fill="#b8b8b8" />
        <path d="M1349 722h11v11h-11z" fill="#666" />
      </Seg>
    </div>
  );
}

function Taskbar() {
  return (
    <div className="flex h-[30px] shrink-0 bg-linear-to-r from-[#021a1d] via-[#18282a] to-[#1a2426] text-[12px] text-white">
      <Seg x={0} y={738} w={333} h={30}>
        <path d="M10 747.200l6.500-1v6.300H10zM17.500 746l8.500-1.200v7.700h-8.500zM10 753.500h6.500v6.300l-6.500-1zM17.500 753.500H26v7.700l-8.500-1.200z" fill="#fff" />
        <circle cx="54" cy="753" r="6.800" stroke="#fff" strokeWidth="1.900" />
        <path d="M82.500 745v2.500h10V745M82.500 750.500h10v6h-10zM82.500 761.500V759h10v2.500M96.500 745v3M96.500 753v9" stroke="#eee" strokeWidth="1.200" /><path d="M95 749h3v3h-3z" fill="#eee" />
        <path d="M121 752c.7-9 14.500-10.500 15 .5v2h-10c.3 4.500 5.500 4.500 9 2.300v3.400c-5.500 3-13 1-12.700-5.700 0-2.300 1.200-4 3.200-5.200-2.200.5-3.700 1.500-4.500 2.700zm5-.2h5.500c0-3.800-5-3.600-5.500 0z" fill="#0f82d8" fillRule="evenodd" />
        <path d="M158 746h6l1.500 2h8.500v11h-16z" fill="#f7cf66" /><path d="M158 750h16v9h-16z" fill="#fde693" /><path d="M161 753h10v7h-3v-3h-4v3h-3z" fill="#37a7e0" /><path d="M152 766h28v2h-28z" fill="#76b9ed" />
        <path d="M195 748h15v12h-15z" fill="#fff" /><path d="M199.500 748c0-5 6.500-5 6.500 0" stroke="#ddd" strokeWidth="1.200" /><path d="M199 751h3v3h-3z" fill="#f25022" /><path d="M203 751h3v3h-3z" fill="#7fba00" /><path d="M199 755h3v3h-3z" fill="#00a4ef" /><path d="M203 755h3v3h-3z" fill="#ffb900" />
        <path d="M232 751l8-6 8 6v9h-16z" fill="#1069b8" /><path d="M232 752l16 8h-16z" fill="#2fb4ee" /><path d="M248 752v8l-8-4z" fill="#1b8ad8" /><path d="M232.500 751h15l-7.500 5z" fill="#c4eafc" />
        <path d="M277 747l5.500 2c.3 5-1.500 8-5.500 10.500-4-2.500-5.800-5.500-5.500-10.500z" fill="#f0f0f0" /><path d="M277 747v12.500M271.500 753h11" stroke="#0b2022" />
        <path d="M307 745h14v15h-14z" fill="#e9f0fa" stroke="#5c86c5" /><path d="M309 748l2.500 9 2.500-7.500 2.500 7.500 2.500-9" stroke="#1e56b0" strokeWidth="2.200" />
      </Seg>
      <div className="flex w-[36px] items-start justify-center border-b-2 border-[#76b9ed] bg-[#3d4f52] pt-[7px]"><div className="h-[15px] w-[15px] bg-white"><TableauMark size={15} /></div></div>
      <div className="grow" />
      <Seg x={1060} y={738} w={162} h={30}>
        <g stroke="#eee" strokeWidth="1.200">
          <circle cx="1075.500" cy="751.500" r="2.500" /><path d="M1071.500 760c0-7 8-7 8 0" /><circle cx="1081" cy="747.500" r="2.500" /><path d="M1079 752c3-2 5.500-.5 6 3" />
          <path d="M1102.500 756l5.500-5.500 5.500 5.500" strokeWidth="1.400" />
          <path d="M1149.500 749.500h12.500v8h-12.500zM1163.500 751.500v4" />
          <path d="M1176 760a11 11 0 0 1 10-11M1178.500 760a8 8 0 0 1 7.500-8M1181.500 760a5 5 0 0 1 4.500-5" />
          <path d="M1196.500 751.500h2.500l3.500-3.500v11l-3.500-3.500h-2.500zM1204.500 751c1 1 1 4 0 5M1207 749c2.300 2 2.300 7 0 9M1209.500 747c3 3 3 10 0 13" />
        </g>
        <circle cx="1185.500" cy="759" r="1.600" fill="#fff" />
        <path d="M1151 751h7v5h-7z" fill="#fff" />
        <path d="M1124.500 745.500h15v11h-15z" fill="#858585" stroke="#1c1c9a" /><path d="M1140 745v12.500h-16" stroke="#d8d8d8" /><path d="M1124 759.500h7M1133 759.500h6" stroke="#b7b7c9" strokeWidth="2" />
      </Seg>
      <span className="w-[36px] leading-[29px] tracking-[-0.4px]">ENG</span>
      <span className="w-[60px] leading-[29px] tracking-[-0.450px] whitespace-nowrap">01:08 PM</span>
      <Seg x={1318} y={738} w={48} h={30}>
        <path d="M1325 745h16v12h-5l-3 3.500-3-3.500h-5z" fill="#fff" /><path d="M1328 748.500h10M1328 751.500h10M1328 754.500h7" stroke="#1a2426" />
        <path d="M1361.500 738v30" stroke="#8a9294" />
      </Seg>
    </div>
  );
}

export default function App() {
  return (
    <div className={"relative flex h-[768px] w-[1366px] flex-col overflow-hidden bg-[#f4f4f4] " + UI}>
      <TitleBar />
      <MenuBar />
      <Toolbar />
      <main className="flex h-[603px] shrink-0">
        <DataPane />
        <Cards />
        <Worksheet />
      </main>
      <SheetTabs />
      <StatusBar />
      <Taskbar />
      <ShowMe />
    </div>
  );
}
